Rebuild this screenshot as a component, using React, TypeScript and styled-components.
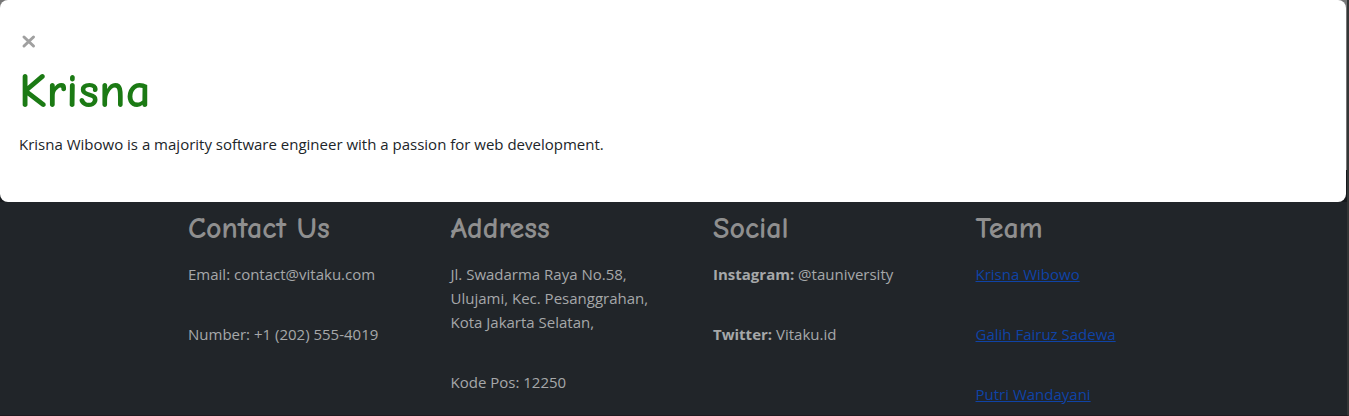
import React from 'react';
import styled, { createGlobalStyle } from 'styled-components';

const GlobalStyle = createGlobalStyle`
  *, *::before, *::after { box-sizing: border-box; }
  body {
    margin: 0;
    background: #212529;
    font-family: "Segoe UI", "Open Sans", sans-serif;
    font-size: 15px;
    line-height: 24px;
  }
`;

const Page = styled.div`
  display: flex;
  flex-direction: column;
  min-height: 100vh;
  background: #212529;
  border-right: 2px solid #333535;
  border-bottom: 1px solid #20191f;
`;

const Backdrop = styled.div`
  padding-right: 1px;
  background: linear-gradient(#777777 170px, #16191c 170px);
`;

const Dialog = styled.section`
  padding: 24px 20px 46px 19px;
  background: #ffffff;
  border-radius: 8px;
  color: #212529;
`;

const CloseButton = styled.button`
  display: block;
  margin: 0 0 7px;
  padding: 10px 2px;
  border: 0;
  background: none;
  color: #a0a0a0;
  cursor: pointer;

  svg { display: block; }
`;

const Name = styled.h1`
  margin: 0 0 16px;
  color: #1b7a14;
  font-family: "Comic Sans MS", "Comic Neue", cursive;
  font-size: 49px;
  font-weight: 700;
  line-height: 50px;
`;

const Bio = styled.p`
  margin: 0;
`;

const Footer = styled.footer`
  display: grid;
  grid-template-columns: repeat(4, 1fr);
  padding: 10px 109px 0 188px;
  background: #212529;
  color: #a6a8a9;
`;

const Column = styled.div`
  display: flex;
  flex-direction: column;
  gap: 36px;
`;

const Heading = styled.h3`
  margin: 0 0 -20px;
  color: #8f8f8f;
  font-family: "Comic Sans MS", "Comic Neue", cursive;
  font-size: 30px;
  font-weight: 700;
  line-height: 34px;
`;

const Entry = styled.p`
  margin: 0;
`;

const TeamLink = styled.a`
  color: #0f43a6;
  text-decoration: underline;
`;

const team = ['Krisna Wibowo', 'Galih Fairuz Sadewa', 'Putri Wandayani'];

export default function App() {
  return (
    <>
      <GlobalStyle />
      <Page>
        <Backdrop>
          <Dialog role="dialog" aria-labelledby="name">
            <CloseButton type="button" aria-label="Close">
              <svg width="15" height="15" viewBox="0 0 15 15" fill="none" stroke="currentColor" strokeWidth="3" strokeLinecap="round">
                <path d="M3 3 12.5 12M12.5 3 3 12" />
              </svg>
            </CloseButton>
            <Name id="name">Krisna</Name>
            <Bio>Krisna Wibowo is a majority software engineer with a passion for web development.</Bio>
          </Dialog>
        </Backdrop>
        <Footer>
          <Column>
            <Heading>Contact Us</Heading>
            <Entry>Email: contact@vitaku.com</Entry>
            <Entry>Number: +1 (202) 555-4019</Entry>
          </Column>
          <Column>
            <Heading>Address</Heading>
            <Entry>
              Jl. Swadarma Raya No.58,<br />
              Ulujami, Kec. Pesanggrahan,<br />
              Kota Jakarta Selatan,
            </Entry>
            <Entry>Kode Pos: 12250</Entry>
          </Column>
          <Column>
            <Heading>Social</Heading>
            <Entry><strong>Instagram:</strong> @tauniversity</Entry>
            <Entry><strong>Twitter:</strong> Vitaku.id</Entry>
          </Column>
          <Column>
            <Heading>Team</Heading>
            {team.map((member) => (
              <Entry key={member}><TeamLink href="#name">{member}</TeamLink></Entry>
            ))}
          </Column>
        </Footer>
      </Page>
    </>
  );
}
